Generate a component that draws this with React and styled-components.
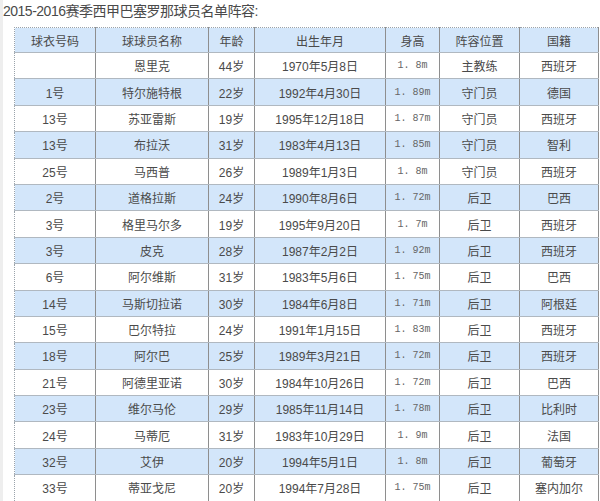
import React from 'react';
import styled, { createGlobalStyle } from 'styled-components';

const sans = `"Liberation Sans", "Noto Sans", "DejaVu Sans", "Noto Sans CJK SC", sans-serif`;
const mono = `"Liberation Mono", "DejaVu Sans Mono", monospace`;

const GlobalStyle = createGlobalStyle`
  html, body {
    margin: 0;
    padding: 0;
    background: #fff;
  }
  body {
    font-family: ${sans};
    color: #333;
  }
`;

const Page = styled.div`
  width: 600px;
  height: 501px;
  overflow: hidden;
  box-sizing: border-box;
  border-left: 3px solid #eeeeee;
  font-family: ${sans};
`;

const Title = styled.div`
  font-family: ${sans};
  font-size: 14px;
  line-height: 22px;
  height: 27px;
  color: #4a4a4a;
  letter-spacing: -0.5px;
`;

const Table = styled.table`
  margin-left: 11px;
  width: 584px;
  table-layout: fixed;
  border-collapse: collapse;
  border-top: 1px dotted #9aa3ab;
  border-left: 1px dotted #9aa3ab;
  font-size: 12px;
`;

const Row = styled.tr`
  height: ${p => (p.$head ? '25px' : '26.4px')};
  background: ${p => (p.$blue ? '#d3e6fa' : '#ffffff')};
`;

const Cell = styled.td`
  border-right: 1px solid #8e8e8e;
  border-bottom: 1px solid #b0b8c0;
  text-align: center;
  padding: 0;
  white-space: nowrap;
  overflow: hidden;
  font-weight: normal;
  font-family: ${p => (p.$mono ? mono : sans)};
  font-size: ${p => (p.$mono ? '10px' : '12px')};
  color: ${p => (p.$mono ? '#666' : '#4a4a4a')};
`;

const cols = [81, 113, 46, 131, 54, 80, 79];
const head = ['球衣号码', '球球员名称', '年龄', '出生年月', '身高', '阵容位置', '国籍'];

const players = [
  ['', '恩里克', '44岁', '1970年5月8日', '1. 8m', '主教练', '西班牙'],
  ['1号', '特尔施特根', '22岁', '1992年4月30日', '1. 89m', '守门员', '德国'],
  ['13号', '苏亚雷斯', '19岁', '1995年12月18日', '1. 87m', '守门员', '西班牙'],
  ['13号', '布拉沃', '31岁', '1983年4月13日', '1. 85m', '守门员', '智利'],
  ['25号', '马西普', '26岁', '1989年1月3日', '1. 8m', '守门员', '西班牙'],
  ['2号', '道格拉斯', '24岁', '1990年8月6日', '1. 72m', '后卫', '巴西'],
  ['3号', '格里马尔多', '19岁', '1995年9月20日', '1. 7m', '后卫', '西班牙'],
  ['3号', '皮克', '28岁', '1987年2月2日', '1. 92m', '后卫', '西班牙'],
  ['6号', '阿尔维斯', '31岁', '1983年5月6日', '1. 75m', '后卫', '巴西'],
  ['14号', '马斯切拉诺', '30岁', '1984年6月8日', '1. 71m', '后卫', '阿根廷'],
  ['15号', '巴尔特拉', '24岁', '1991年1月15日', '1. 83m', '后卫', '西班牙'],
  ['18号', '阿尔巴', '25岁', '1989年3月21日', '1. 72m', '后卫', '西班牙'],
  ['21号', '阿德里亚诺', '30岁', '1984年10月26日', '1. 72m', '后卫', '巴西'],
  ['23号', '维尔马伦', '29岁', '1985年11月14日', '1. 78m', '后卫', '比利时'],
  ['24号', '马蒂厄', '31岁', '1983年10月29日', '1. 9m', '后卫', '法国'],
  ['32号', '艾伊', '20岁', '1994年5月1日', '1. 8m', '后卫', '葡萄牙'],
  ['33号', '蒂亚戈尼', '20岁', '1994年7月28日', '1. 75m', '后卫', '塞内加尔'],
];

export default function App() {
  return (
    <>
      <GlobalStyle />
      <Page>
        <Title>2015-2016赛季西甲巴塞罗那球员名单阵容:</Title>
        <Table>
          <colgroup>
            {cols.map((w, i) => (
              <col key={i} style={{ width: w }} />
            ))}
          </colgroup>
          <thead>
            <Row $head $blue>
              {head.map(h => (
                <Cell as="th" key={h}>{h}</Cell>
              ))}
            </Row>
          </thead>
          <tbody>
            {players.map((p, i) => (
              <Row key={i} $blue={i % 2 === 1}>
                {p.map((v, j) => (
                  <Cell key={j} $mono={j === 4}>{v}</Cell>
                ))}
              </Row>
            ))}
          </tbody>
        </Table>
      </Page>
    </>
  );
}
